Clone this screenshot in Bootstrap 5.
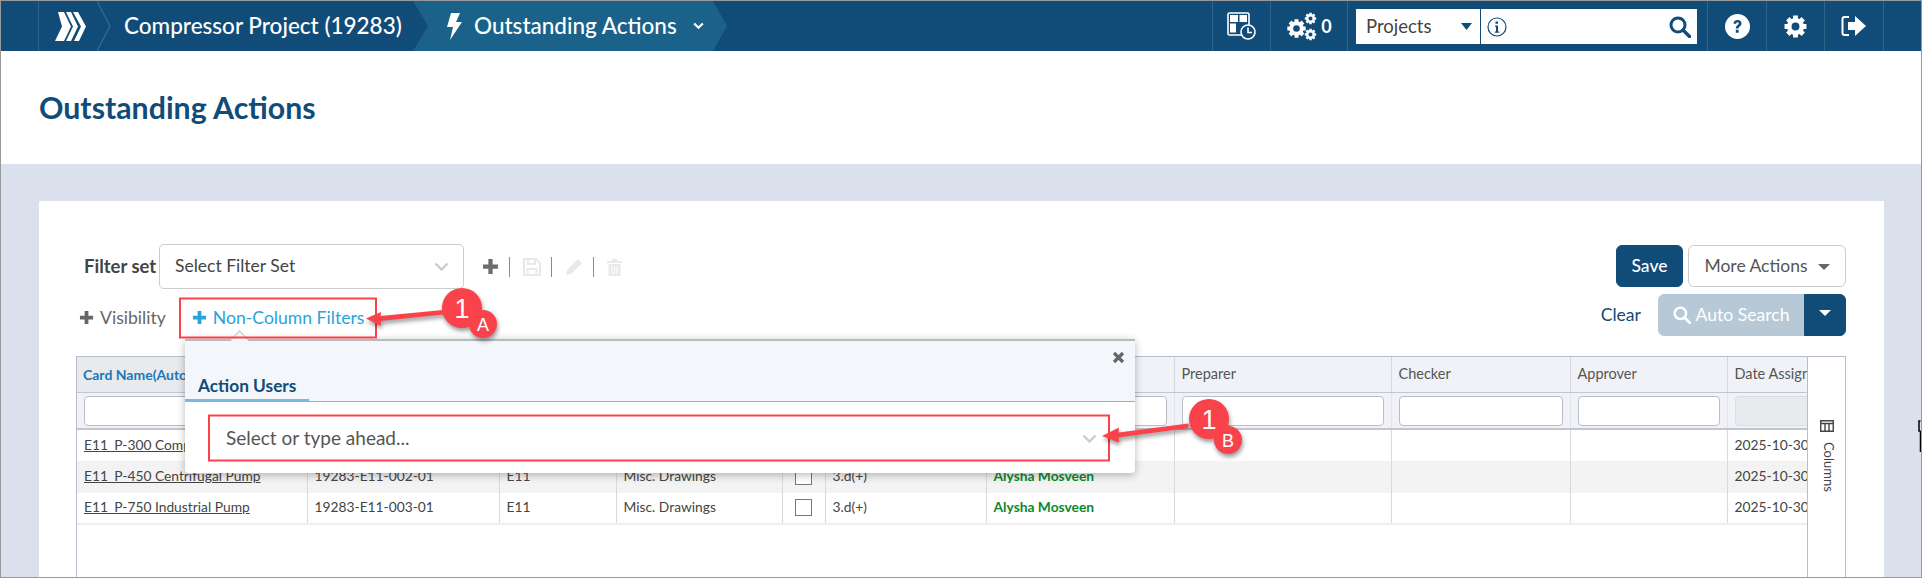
<!DOCTYPE html>
<html lang="en">
<head>
<meta charset="UTF-8">
<meta name="viewport" content="width=device-width, initial-scale=1">
<title>Outstanding Actions</title>
<link href="https://cdn.jsdelivr.net/npm/bootstrap@5.3.0/dist/css/bootstrap.min.css" rel="stylesheet">
<style>
  html, body { height: 100%; }
  body { font-family: Lato, "Liberation Sans", sans-serif; color: #444; background: #fff; overflow: hidden; }
  .page-frame { position: relative; width: 1922px; height: 578px; overflow: hidden; border: 1px solid #999; }

  /* top bar */
  .top-bar { height: 50px; background: #114c78; color: #fff; }
  .bar-start { width: 38px; border-right: 1px solid #2f6388; }
  .crumb { position: relative; height: 50px; font-size: 22.5px; font-weight: 500; white-space: nowrap; }
  .crumb-line { position: absolute; top: 0; height: 50px; }
  .crumb-home { width: 72px; padding-left: 16px; }
  .crumb-project { width: 302px; padding-left: 13px; }
  .crumb-active { width: 314px; padding-left: 34px; background: #1a6289; clip-path: polygon(0 0, 300px 0, 314px 25px, 300px 50px, 0 50px, 15px 25px); }
  .bar-cell { height: 50px; border-left: 1px solid #2f6388; flex: none; }
  .bar-search { width: 360px; padding: 8px 10px 7px 8px; }
  .search-scope { width: 125px; background: #fff; color: #444; font-size: 18.5px; padding-left: 10px; border-right: 1px solid #114c78; }
  .search-box { width: 216px; background: #fff; color: #114c78; padding: 0 6px; }

  /* page heading */
  .head-strip { height: 113px; padding: 39px 0 0 38px; }
  .head-strip h1 { font-size: 30.3px; font-weight: 700; color: #114c78; line-height: 34px; margin: 0; }
  .content-bg { background: #dbe1ec; height: 414px; padding: 37px 37px 0 38px; }
  .sheet { position: relative; background: #fff; height: 377px; padding: 43px 38px 0 38px; }

  /* toolbar */
  .filter-label { width: 67px; font-size: 18.5px; font-weight: 700; color: #444; margin-left: 7px; margin-right: 8px; white-space: nowrap; }
  .filter-select { width: 305px; height: 45px; border: 1px solid #ccc; border-radius: 5px; padding: 0 14px 0 15px; font-size: 17.5px; }
  .tool-sep { width: 1px; height: 20px; background: #3fa5cf; }
  .tool-icon { margin: 0 2px 0 5px; }
  .btn-navy { background: #114c78; border-color: #114c78; color: #fff; font-size: 17.5px; font-weight: 500; }
  .btn-navy:hover { background: #114c78; color: #fff; }
  .btn-more { width: 158px; height: 42px; font-size: 17.5px; border: 1px solid #ccc; color: #555; background: #fff; margin-left: 5px; }
  .btn-more::after { margin-left: 10px; border-width: 6px 6.5px 0; border-top-color: #666; vertical-align: 2px; }
  .save-btn { width: 67px; height: 42px; }
  .row-two { margin-top: 5px; height: 42px; }
  .vis-group { padding-top: 6px; }
  .vis-link { font-size: 17.6px; color: #666; margin-left: 2px; }
  .ncf-link { font-size: 17.6px; color: #29a3dc; margin-left: 14px; padding-left: 12px; }
  .clear-link { font-size: 17.6px; color: #114c78; margin-right: 17px; }
  .auto-btn, .auto-btn:disabled { flex: none; width: 147px; height: 42px; background: #b7c9d6; border-color: #b7c9d6; color: #fff; font-size: 17.6px; opacity: 1; }
  .btn-group > .auto-caret:not(:first-child) { flex: none; width: 42px; height: 42px; margin-left: 1px; }
  .auto-caret::after { border-width: 6px 6.5px 0; }

  /* grid */
  .grid-shell { margin: 20px 0 0 -1px; height: 222px; border: 1px solid #b9bdca; border-bottom: 0; overflow: hidden; }
  .grid-scroll { width: 1730px; overflow: hidden; flex: none; }
  .data-grid { table-layout: fixed; width: 1828px; border-collapse: collapse; font-size: 13.8px; }
  .data-grid th { height: 35px; background: #f1f2f7; font-size: 14.5px; font-weight: 400; color: #555; padding: 0 7px; border-right: 1px solid #d5d7de; border-bottom: 1px solid #c3c6d0; white-space: nowrap; overflow: hidden; }
  .data-grid th.sorted { background: #e9eaee; color: #1a78b8; font-weight: 700; padding-left: 6px; font-size: 14px; }
  .data-grid .filter-row td { height: 35px; background: #f1f2f7; padding: 3px 7px 2px; border-right: 1px solid #e2e4ea; border-bottom: 2px solid #c3c6d0; }
  .data-grid .filter-row input { display: block; width: 100%; height: 30px; border: 1px solid #bbbdc6; border-radius: 4px; background: #fff; }
  .data-grid .filter-row input:disabled { background: #e9eaee; border-color: #dcdde3; }
  .data-grid tbody td { padding: 0 7px; border-right: 1px solid #d9dade; white-space: nowrap; overflow: hidden; }
  .data-grid .data-row td { height: 32px; }
  .data-grid .data-row.even td { background: #f3f3f3; }
  .data-grid .data-row.last td { height: 31px; border-bottom: 2px solid #eee; }
  .card-link { color: #444; text-decoration: underline; }
  .user-name { color: #0a8a2c; font-weight: 700; }
  .tick { display: block; width: 17px; height: 17px; margin: 0 auto; border: 1px solid #777; border-radius: 0; background: #fff; appearance: none; }
  .columns-tab { flex: 1; border-left: 1px solid #b9bdca; font-size: 13px; color: #444; padding-top: 63px; gap: 10px; }
  .columns-tab span { writing-mode: vertical-rl; padding-left: 3px; }

  /* popover */
  .filter-pop { position: absolute; left: 146px; top: 138px; width: 950px; height: 134px; background: #fff; border-top: 2px solid #b9bbbf; border-radius: 0 0 4px 4px; box-shadow: 0 2px 8px rgba(0,0,0,.28); }
  .filter-pop::before { content: ""; position: absolute; left: 48px; top: -8px; width: 13px; height: 13px; background: #f3f6fb; border-left: 1px solid #c5c7cb; border-top: 1px solid #c5c7cb; transform: rotate(45deg); }
  .pop-head { position: relative; height: 61px; background: #f3f6fb; border-bottom: 1px solid #7ab8e8; }
  .pop-tab { position: absolute; left: 0; bottom: -1px; width: 124px; height: 28px; padding-left: 13px; border-bottom: 3px solid #7ab8e8; font-size: 17.3px; font-weight: 700; color: #114c78; line-height: 24px; white-space: nowrap; }
  .pop-close { position: absolute; right: 10px; top: 10px; }
  .pop-select { margin: 14px 25px 0 24px; height: 44px; padding: 0 13px 0 17px; font-size: 19px; color: #555; }

  .notes { position: absolute; left: -1px; top: -1px; pointer-events: none; font-family: "Liberation Sans", sans-serif; }
  .notes .mark { filter: drop-shadow(1px 3px 2px rgba(0,0,0,.4)); }
</style>
</head>
<body>
<svg width="0" height="0" class="position-absolute">
  <symbol id="gear" viewBox="0 0 24 24">
    <path d="M12 1.500v5M12 17.500v5M1.500 12h5M17.500 12h5M4.600 4.600l3.500 3.500M15.900 15.900l3.500 3.500M19.400 4.600l-3.500 3.500M8.100 15.900l-3.500 3.500" stroke="currentColor" stroke-width="4.600" fill="none"/>
    <circle cx="12" cy="12" r="6" fill="none" stroke="currentColor" stroke-width="4.400"/>
  </symbol>
  <symbol id="lens" viewBox="0 0 22 22">
    <circle cx="9" cy="9" r="7" fill="none" stroke="currentColor" stroke-width="3"/>
    <path d="M14 14l6.500 6.500" stroke="currentColor" stroke-width="3.400" stroke-linecap="round"/>
  </symbol>
  <symbol id="plus" viewBox="0 0 16 16">
    <path d="M6 1h4v5h5v4h-5v5H6v-5H1V6h5z" fill="currentColor"/>
  </symbol>
</svg>

<div class="page-frame">
  <nav class="top-bar d-flex align-items-center">
    <div class="bar-start h-100"></div>
    <div class="crumb crumb-home d-flex align-items-center">
      <svg width="31" height="29" viewBox="0 0 31 29"><path d="M3 0h6l7 14.500L9 29H0l7-14.500zM11 0h5l7 14.500L16 29h-5l7-14.500zM18 0h5l8 14.500L24 29h-5l7-14.500z" fill="#fff"/></svg>
      <svg class="crumb-line" style="left:58px" width="16" height="50"><path d="M0 0l13 25L0 50" fill="none" stroke="#2f6f9a" stroke-width="1.200"/></svg>
    </div>
    <div class="crumb crumb-project d-flex align-items-center">Compressor Project (19283)</div>
    <div class="crumb crumb-active d-flex align-items-center gap-2">
      <svg width="15" height="27" viewBox="0 0 15 27"><path d="M4 0h9L9 9h6L3 27l3-13H0z" fill="#fff"/></svg>
      <span class="ms-1">Outstanding Actions</span>
      <svg class="ms-2" width="11" height="8" viewBox="0 0 11 8"><path d="M1.200 1.500l4.300 4.300 4.300-4.300" fill="none" stroke="#fff" stroke-width="2.200"/></svg>
    </div>

    <div class="ms-auto d-flex align-items-center">
      <div class="bar-cell d-flex align-items-center justify-content-center" style="width:58px">
        <svg width="29" height="28" viewBox="0 0 29 28">
          <rect x="1" y="1" width="21" height="22" rx="1.500" fill="none" stroke="#fff" stroke-width="1.600"/>
          <path d="M3 3h8v7H3zM12.500 3H20v7h-7.500zM3 11.500h6v9H3z" fill="#fff"/>
          <circle cx="21" cy="20" r="7" fill="#114c78" stroke="#fff" stroke-width="1.600"/>
          <path d="M21 15.500V20.500h4" fill="none" stroke="#fff" stroke-width="1.600"/>
        </svg>
      </div>
      <div class="bar-cell d-flex align-items-center justify-content-center gap-1" style="width:77px">
        <svg width="31" height="29" viewBox="0 0 31 29">
          <use href="#gear" x="0" y="6" width="21" height="21" color="#fff"/>
          <use href="#gear" x="18" y="0" width="13" height="13" color="#fff"/>
          <use href="#gear" x="18" y="16" width="13" height="13" color="#fff"/>
        </svg>
        <span class="fw-bold" style="font-size:18px">0</span>
      </div>
      <div class="bar-cell bar-search d-flex">
        <div class="search-scope d-flex align-items-center justify-content-between pe-2">
          <span>Projects</span>
          <svg width="11" height="7" viewBox="0 0 11 7"><path d="M0 0h11L5.500 7z" fill="#114c78"/></svg>
        </div>
        <div class="search-box d-flex align-items-center justify-content-between">
          <svg width="20" height="20" viewBox="0 0 20 20"><circle cx="10" cy="10" r="9" fill="none" stroke="#114c78" stroke-width="1.200"/><path d="M8.500 4.500h2.500v2.200H8.500zM8 8.500h3v6h1.200v1.200H7.800v-1.200H9V9.700H8z" fill="#114c78"/></svg>
          <svg width="22" height="22"><use href="#lens" width="22" height="22"/></svg>
        </div>
      </div>
      <div class="bar-cell d-flex align-items-center justify-content-center" style="width:59px">
        <svg width="25" height="25" viewBox="0 0 25 25"><circle cx="12.500" cy="12.500" r="12.500" fill="#fff"/><path d="M8.500 9.800c0-2.400 1.800-3.800 4-3.800 2.300 0 4 1.300 4 3.400 0 2.700-3 2.800-3 5H10.800c0-3.300 2.900-3.400 2.900-5 0-.7-.5-1.100-1.200-1.100-.8 0-1.200.5-1.300 1.500zM10.800 15.800h2.800v3h-2.800z" fill="#114c78"/></svg>
      </div>
      <div class="bar-cell d-flex align-items-center justify-content-center" style="width:58px">
        <svg width="25" height="25" viewBox="0 0 24 24"><use href="#gear" width="24" height="24" color="#fff"/></svg>
      </div>
      <div class="bar-cell d-flex align-items-center justify-content-center" style="width:59px">
        <svg width="26" height="24" viewBox="0 0 26 24"><path d="M8 3H3.500C2.300 3 1.500 3.800 1.500 5v14c0 1.200.8 2 2 2H8" fill="none" stroke="#fff" stroke-width="2"/><path d="M7 8h7V2l11 10-11 10v-6H7z" fill="#fff"/></svg>
      </div>
      <div class="bar-cell" style="width:38px"></div>
    </div>
  </nav>

  <div class="head-strip">
    <h1>Outstanding Actions</h1>
  </div>

  <div class="content-bg">
    <div class="sheet">
      <div class="d-flex align-items-start justify-content-between">
        <div class="d-flex align-items-center">
          <span class="filter-label">Filter set</span>
          <div class="filter-select d-flex align-items-center justify-content-between">
            <span>Select Filter Set</span>
            <svg width="15" height="9" viewBox="0 0 15 9"><path d="M1.500 1.500l6 6 6-6" fill="none" stroke="#ccc" stroke-width="2.400"/></svg>
          </div>
          <div class="d-flex align-items-center gap-2" style="margin-left:18px">
            <svg style="color:#6d6d6d;margin-right:2px" width="17" height="17"><use href="#plus" width="17" height="17"/></svg>
            <span class="tool-sep"></span>
            <svg class="tool-icon" width="18" height="18" viewBox="0 0 18 18"><path d="M1 1h12l4 4v12H1z M5 1v5h7V1 M4.500 17v-6h9v6" fill="none" stroke="#e9e9e9" stroke-width="2"/></svg>
            <span class="tool-sep"></span>
            <svg class="tool-icon" width="18" height="18" viewBox="0 0 18 18"><path d="M13 1l4 4-11 11-5 1 1-5zM2 13l3 3" fill="#e9e9e9"/></svg>
            <span class="tool-sep"></span>
            <svg class="tool-icon" width="15" height="18" viewBox="0 0 15 18"><path d="M0 3h5V1h5v2h5v2H0zM1.500 6h12v12h-12z" fill="#e9e9e9"/><path d="M5 8v8M7.500 8v8M10 8v8" stroke="#fff" stroke-width="1"/></svg>
          </div>
        </div>
        <div class="d-flex" style="margin-top:1px">
          <button type="button" class="btn btn-navy save-btn p-0">Save</button>
          <button type="button" class="btn btn-more dropdown-toggle p-0">More Actions</button>
        </div>
      </div>

      <div class="row-two d-flex align-items-center justify-content-between">
        <div class="vis-group d-flex align-items-center">
          <span class="vis-link d-flex align-items-center" style="gap:6px"><svg width="15" height="15" style="color:#666"><use href="#plus" width="15" height="15"/></svg>Visibility</span>
          <span class="ncf-link d-flex align-items-center" style="gap:6px"><svg width="15" height="15" style="color:#29a3dc"><use href="#plus" width="15" height="15"/></svg>Non-Column Filters</span>
        </div>
        <div class="d-flex align-items-center">
          <span class="clear-link">Clear</span>
          <div class="btn-group">
            <button type="button" class="btn auto-btn p-0 d-flex align-items-center justify-content-center gap-1" disabled>
              <svg width="18" height="18" style="color:#fff"><use href="#lens" width="18" height="18"/></svg>Auto Search
            </button>
            <button type="button" class="btn btn-navy auto-caret dropdown-toggle p-0"></button>
          </div>
        </div>
      </div>

      <div class="grid-shell d-flex">
        <div class="grid-scroll">
          <table class="data-grid">
            <colgroup>
              <col style="width:230px"><col style="width:192px"><col style="width:117px"><col style="width:166px"><col style="width:43px"><col style="width:161px"><col style="width:188px"><col style="width:217px"><col style="width:179px"><col style="width:157px"><col style="width:178px">
            </colgroup>
            <thead>
              <tr>
                <th class="sorted">Card Name(Auto)</th><th></th><th></th><th></th><th></th><th></th><th></th>
                <th>Preparer</th><th>Checker</th><th>Approver</th><th>Date Assigned</th>
              </tr>
            </thead>
            <tbody>
              <tr class="filter-row">
                <td><input type="text"></td><td><input type="text"></td><td><input type="text"></td><td><input type="text"></td><td></td><td><input type="text"></td><td><input type="text"></td>
                <td><input type="text"></td><td><input type="text"></td><td><input type="text"></td><td><input type="text" disabled></td>
              </tr>
              <tr class="data-row">
                <td><a class="card-link" href="#">E11_P-300 Compressor</a></td><td>19283-E11-001-01</td><td>E11</td><td>Misc. Drawings</td><td><input class="tick" type="checkbox"></td><td>3.d(+)</td><td class="user-name">Alysha Mosveen</td><td></td><td></td><td></td><td>2025-10-30</td>
              </tr>
              <tr class="data-row even">
                <td><a class="card-link" href="#">E11_P-450 Centrifugal Pump</a></td><td>19283-E11-002-01</td><td>E11</td><td>Misc. Drawings</td><td><input class="tick" type="checkbox"></td><td>3.d(+)</td><td class="user-name">Alysha Mosveen</td><td></td><td></td><td></td><td>2025-10-30</td>
              </tr>
              <tr class="data-row last">
                <td><a class="card-link" href="#">E11_P-750 Industrial Pump</a></td><td>19283-E11-003-01</td><td>E11</td><td>Misc. Drawings</td><td><input class="tick" type="checkbox"></td><td>3.d(+)</td><td class="user-name">Alysha Mosveen</td><td></td><td></td><td></td><td>2025-10-30</td>
              </tr>
            </tbody>
          </table>
        </div>
        <div class="columns-tab d-flex flex-column align-items-center">
          <svg width="14" height="12" viewBox="0 0 14 12"><path d="M.75.75h12.500v10.500H.75zM.75 3.500h12.500M5 3.500v7.750M9 3.500v7.750" fill="none" stroke="#444" stroke-width="1.400"/></svg>
          <span>Columns</span>
        </div>
      </div>

      <div class="filter-pop">
        <div class="pop-head">
          <div class="pop-tab">Action Users</div>
          <svg class="pop-close" width="13" height="13" viewBox="0 0 13 13"><path d="M2 2l9 9M11 2l-9 9" stroke="#666" stroke-width="3.200"/></svg>
        </div>
        <div class="pop-select d-flex align-items-center justify-content-between">
          <span>Select or type ahead...</span>
          <svg width="15" height="9" viewBox="0 0 15 9"><path d="M1.500 1.500l6 6 6-6" fill="none" stroke="#ccc" stroke-width="2.400"/></svg>
        </div>
      </div>
    </div>
  </div>

  <svg class="notes" width="1922" height="578">
    <rect x="180" y="298.500" width="196" height="39" fill="none" stroke="#f9424a" stroke-width="2"/>
    <rect x="209" y="415.500" width="900" height="45" fill="none" stroke="#f9424a" stroke-width="2"/>
    <g class="mark" fill="#f9424a">
      <path d="M366 318.500L381 312l-.5 4 63-6v4.500l-63 6.500.5 5z"/>
      <circle cx="462" cy="308" r="20"/>
      <circle cx="483" cy="324" r="14"/>
    </g>
    <g class="mark" fill="#f9424a">
      <path d="M1102 436l17-8.500-.5 5 70-9v4.500l-70 9.500.5 5z"/>
      <circle cx="1209" cy="419" r="20"/>
      <circle cx="1228" cy="440" r="14"/>
    </g>
    <g fill="#fff" text-anchor="middle">
      <text x="462" y="318" font-size="27">1</text>
      <text x="483" y="331" font-size="18">A</text>
      <text x="1209" y="429" font-size="27">1</text>
      <text x="1228" y="447" font-size="18">B</text>
    </g>
    <path d="M1920.500 421h-1.500v10h1.500M1920.500 431v21" fill="none" stroke="#000" stroke-width="1.500"/>
  </svg>
</div>

<script src="https://cdn.jsdelivr.net/npm/bootstrap@5.3.0/dist/js/bootstrap.bundle.min.js"></script>
</body>
</html>
